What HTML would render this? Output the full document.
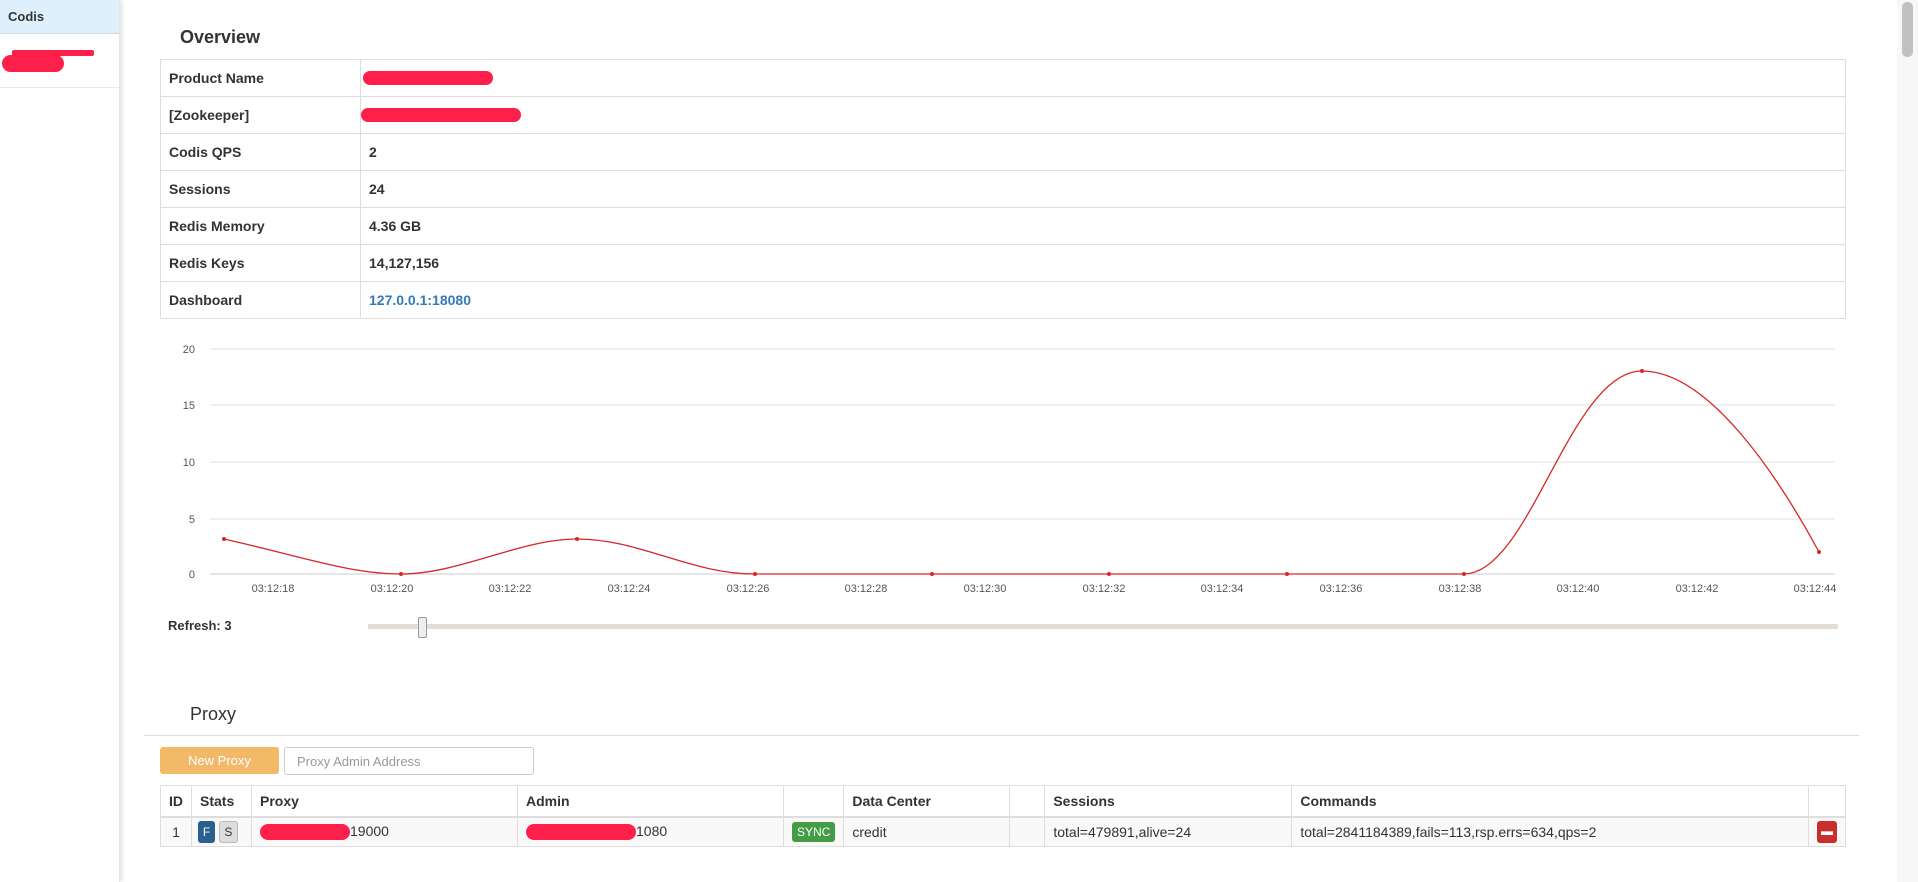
<!DOCTYPE html>
<html><head><meta charset="utf-8"><style>
*{box-sizing:border-box}
body{margin:0;width:1918px;height:882px;overflow:hidden;font-family:"Liberation Sans",sans-serif;font-size:14px;color:#333;background:#fff;position:relative}
.side{position:absolute;left:0;top:0;width:120px;height:882px;background:#fff;box-shadow:2px 0 4px rgba(0,0,0,.12);border-right:1px solid #e5e5e5}
.side .hd{height:34px;background:#dff0fd;border-bottom:1px solid #cfd8e0;font-weight:bold;padding:9px 8px;font-size:13px}
.side .it{height:54px;border-bottom:1px solid #e8e8e8;position:relative}
.red{position:absolute;background:#ff1f4b;border-radius:10px}
.abs{position:absolute}
table{border-collapse:collapse;position:absolute}
td,th{border:1px solid #ddd;padding:0 8px;text-align:left}
.ov td{height:37px;font-weight:bold}
.px th{height:31px}
.px td{height:30px;background:#f9f9f9}
.px thead th{border-bottom:2px solid #ddd}
.sb{position:absolute;right:0;top:0;width:21px;height:882px;background:#f7f7f7}
.sb div{position:absolute;left:5px;top:2px;width:11px;height:55px;background:#c1c1c1;border-radius:5px}
.btn{display:inline-block;border-radius:3px;color:#fff;font-size:12px;text-align:center;vertical-align:middle}
</style></head><body>
<div class="side"><div class="hd">Codis</div><div class="it">
<div class="red" style="left:12px;top:16px;width:82px;height:6px;border-radius:2px"></div>
<div class="red" style="left:2px;top:21px;width:62px;height:17px"></div></div></div>
<div class="sb"><div></div></div>

<div class="abs" style="left:180px;top:27px;font-size:18px;font-weight:bold">Overview</div>
<table class="ov" style="left:160px;top:59px;width:1686px">
<tr><td style="width:200px">Product Name</td><td><div class="red" style="position:relative;width:130px;height:14px;margin-left:-6px"></div></td></tr>
<tr><td>[Zookeeper]</td><td><div class="red" style="position:relative;width:160px;height:14px;margin-left:-8px"></div></td></tr>
<tr><td>Codis QPS</td><td>2</td></tr>
<tr><td>Sessions</td><td>24</td></tr>
<tr><td>Redis Memory</td><td>4.36 GB</td></tr>
<tr><td>Redis Keys</td><td>14,127,156</td></tr>
<tr><td>Dashboard</td><td style="color:#337ab7">127.0.0.1:18080</td></tr>
</table>

<svg class="abs" style="left:0;top:0" width="1918" height="600" font-family="Liberation Sans" font-size="11" fill="#555">
<g stroke="#e0e0e0" stroke-width="1">
<line x1="210" y1="349" x2="1835" y2="349"/><line x1="210" y1="405" x2="1835" y2="405"/>
<line x1="210" y1="462" x2="1835" y2="462"/><line x1="210" y1="519" x2="1835" y2="519"/>
<line x1="210" y1="574" x2="1835" y2="574" stroke="#ccc"/></g>
<g text-anchor="end"><text x="195" y="353">20</text><text x="195" y="409">15</text><text x="195" y="466">10</text><text x="195" y="523">5</text><text x="195" y="578">0</text></g>
<g text-anchor="middle">
<text x="273" y="592">03:12:18</text><text x="392" y="592">03:12:20</text><text x="510" y="592">03:12:22</text><text x="629" y="592">03:12:24</text><text x="748" y="592">03:12:26</text><text x="866" y="592">03:12:28</text><text x="985" y="592">03:12:30</text><text x="1104" y="592">03:12:32</text><text x="1222" y="592">03:12:34</text><text x="1341" y="592">03:12:36</text><text x="1460" y="592">03:12:38</text><text x="1578" y="592">03:12:40</text><text x="1697" y="592">03:12:42</text><text x="1815" y="592">03:12:44</text></g>
<path fill="none" stroke="#d62728" stroke-width="1.3" d="M224,539 C300,556 350,574 401,574 C460,574 520,539 577,539 C640,539 690,574 755,574 L1464,574 C1530,574 1570,371 1642,371 C1710,371 1780,480 1819,552"/>
<g fill="#d62728"><circle cx="224" cy="539" r="2"/><circle cx="401" cy="574" r="2"/><circle cx="577" cy="539" r="2"/><circle cx="755" cy="574" r="2"/><circle cx="932" cy="574" r="2"/><circle cx="1109" cy="574" r="2"/><circle cx="1287" cy="574" r="2"/><circle cx="1464" cy="574" r="2"/><circle cx="1642" cy="371" r="2"/><circle cx="1819" cy="552" r="2"/></g>
</svg>

<div class="abs" style="left:168px;top:618px;font-weight:bold;font-size:13px">Refresh: 3</div>
<div class="abs" style="left:368px;top:624px;width:1470px;height:5px;background:#e2ddd6"></div>
<div class="abs" style="left:418px;top:617px;width:9px;height:21px;background:#eee;border:1px solid #999;border-radius:2px"></div>

<div class="abs" style="left:190px;top:704px;font-size:18px">Proxy</div>
<div class="abs" style="left:144px;top:735px;width:1715px;height:1px;background:#ddd"></div>
<div class="abs btn" style="left:160px;top:747px;width:119px;height:27px;line-height:27px;background:#f0ad4e;opacity:.85;font-size:13px">New Proxy</div>
<div class="abs" style="left:284px;top:747px;width:250px;height:28px;border:1px solid #ccc;border-radius:3px;color:#999;padding:6px 12px;font-size:13px">Proxy Admin Address</div>

<table class="px" style="left:160px;top:785px;width:1686px;font-size:14px">
<thead><tr><th style="width:30px">ID</th><th style="width:60px">Stats</th><th style="width:266px">Proxy</th><th style="width:266px">Admin</th><th style="width:60px"></th><th style="width:166px">Data Center</th><th style="width:35px"></th><th style="width:247px">Sessions</th><th>Commands</th><th style="width:36px"></th></tr></thead>
<tr><td style="text-align:center">1</td><td style="padding:0 6px"><span class="btn" style="background:#286090;width:17px;height:22px;line-height:22px">F</span> <span class="btn" style="background:#ddd;color:#333;border:1px solid #bbb;width:19px;height:22px;line-height:20px">S</span></td>
<td><span class="red" style="position:relative;display:inline-block;width:90px;height:16px;vertical-align:middle"></span>19000</td>
<td><span class="red" style="position:relative;display:inline-block;width:110px;height:16px;vertical-align:middle"></span>1080</td>
<td><span class="btn" style="background:#449d44;padding:3px 5px;font-size:12px">SYNC</span></td><td>credit</td><td></td><td>total=479891,alive=24</td><td>total=2841184389,fails=113,rsp.errs=634,qps=2</td>
<td><span class="btn" style="background:#c9302c;width:20px;height:22px;line-height:20px;font-weight:bold">▬</span></td></tr>
</table>
</body></html>
